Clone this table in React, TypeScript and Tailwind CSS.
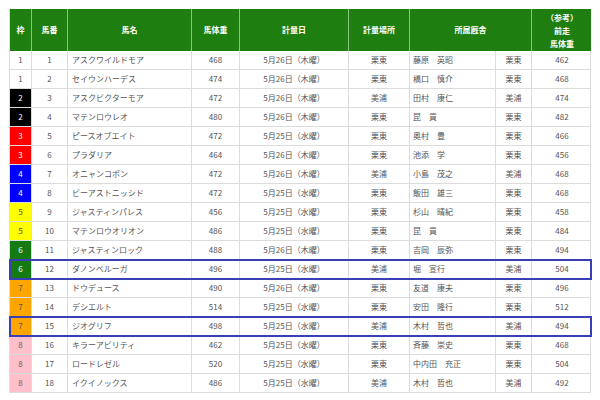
import React from "react";

type Row = {
  waku: number;
  ban: number;
  name: string;
  weight: number;
  day: 25 | 26;
  place: string;
  trainer: string;
  stable: string;
  prev: number;
};

const rows: Row[] = [
  { waku: 1, ban: 1, name: "アスクワイルドモア", weight: 468, day: 26, place: "栗東", trainer: "藤原　英昭", stable: "栗東", prev: 462 },
  { waku: 1, ban: 2, name: "セイウンハーデス", weight: 474, day: 26, place: "栗東", trainer: "橋口　慎介", stable: "栗東", prev: 468 },
  { waku: 2, ban: 3, name: "アスクビクターモア", weight: 472, day: 26, place: "美浦", trainer: "田村　康仁", stable: "美浦", prev: 474 },
  { waku: 2, ban: 4, name: "マテンロウレオ", weight: 480, day: 26, place: "栗東", trainer: "昆　貢", stable: "栗東", prev: 482 },
  { waku: 3, ban: 5, name: "ピースオブエイト", weight: 472, day: 25, place: "栗東", trainer: "奥村　豊", stable: "栗東", prev: 466 },
  { waku: 3, ban: 6, name: "プラダリア", weight: 464, day: 26, place: "栗東", trainer: "池添　学", stable: "栗東", prev: 456 },
  { waku: 4, ban: 7, name: "オニャンコポン", weight: 472, day: 26, place: "美浦", trainer: "小島　茂之", stable: "美浦", prev: 468 },
  { waku: 4, ban: 8, name: "ビーアストニッシド", weight: 472, day: 25, place: "栗東", trainer: "飯田　雄三", stable: "栗東", prev: 468 },
  { waku: 5, ban: 9, name: "ジャスティンパレス", weight: 456, day: 25, place: "栗東", trainer: "杉山　晴紀", stable: "栗東", prev: 458 },
  { waku: 5, ban: 10, name: "マテンロウオリオン", weight: 486, day: 25, place: "栗東", trainer: "昆　貢", stable: "栗東", prev: 484 },
  { waku: 6, ban: 11, name: "ジャスティンロック", weight: 488, day: 26, place: "栗東", trainer: "吉岡　辰弥", stable: "栗東", prev: 494 },
  { waku: 6, ban: 12, name: "ダノンベルーガ", weight: 496, day: 25, place: "美浦", trainer: "堀　宣行", stable: "美浦", prev: 504 },
  { waku: 7, ban: 13, name: "ドウデュース", weight: 490, day: 26, place: "栗東", trainer: "友道　康夫", stable: "栗東", prev: 496 },
  { waku: 7, ban: 14, name: "デシエルト", weight: 514, day: 25, place: "栗東", trainer: "安田　隆行", stable: "栗東", prev: 512 },
  { waku: 7, ban: 15, name: "ジオグリフ", weight: 498, day: 25, place: "美浦", trainer: "木村　哲也", stable: "美浦", prev: 494 },
  { waku: 8, ban: 16, name: "キラーアビリティ", weight: 462, day: 25, place: "栗東", trainer: "斉藤　崇史", stable: "栗東", prev: 468 },
  { waku: 8, ban: 17, name: "ロードレゼル", weight: 520, day: 25, place: "栗東", trainer: "中内田　充正", stable: "栗東", prev: 504 },
  { waku: 8, ban: 18, name: "イクイノックス", weight: 486, day: 25, place: "美浦", trainer: "木村　哲也", stable: "美浦", prev: 492 },
];

const wakuClass: Record<number, string> = {
  1: "bg-white text-[#555]",
  2: "bg-black text-white",
  3: "bg-[#ff0000] text-white",
  4: "bg-[#0000ff] text-white",
  5: "bg-[#ffff00] text-[#555]",
  6: "bg-[#157a12] text-white",
  7: "bg-[#ffa500] text-[#555]",
  8: "bg-[#ffc0cb] text-[#666]",
};

const highlighted = [12, 15];

const cols = "grid grid-cols-[22px_36px_124px_48px_109px_61px_86px_36px_60px]";

export default function App() {
  return (
    <div
      className="w-[600px] h-[400px] bg-white pl-[9px] pt-[9px]"
      style={{ fontFamily: '"Noto Sans CJK JP", "Noto Sans", sans-serif' }}
    >
      <div className="w-[582px] border-l border-[#dcdcdc]">
        {/* header */}
        <div className={`${cols} h-[42px] bg-[#1e7f10] text-white text-[8px] font-bold`}>
          <div className="flex items-center justify-center border-r border-[#8cc283]">枠</div>
          <div className="flex items-center justify-center border-r border-[#8cc283]">馬番</div>
          <div className="flex items-center justify-center border-r border-[#8cc283]">馬名</div>
          <div className="flex items-center justify-center border-r border-[#8cc283]">馬体重</div>
          <div className="flex items-center justify-center border-r border-[#8cc283]">計量日</div>
          <div className="flex items-center justify-center border-r border-[#8cc283]">計量場所</div>
          <div className="col-span-2 flex items-center justify-center border-r border-[#8cc283]">所属厩舎</div>
          <div className="flex flex-col items-center justify-center leading-[13px]">
            <span>（参考）</span>
            <span>前走</span>
            <span>馬体重</span>
          </div>
        </div>

        {/* body */}
        {rows.map((r) => {
          const hl = highlighted.includes(r.ban);
          return (
            <div
              key={r.ban}
              className={`${cols} h-[19px] text-[8px] text-[#555] border-b border-r border-[#dcdcdc] ${
                hl ? "relative z-10 outline-2 outline-[#3a3fb6] -outline-offset-1" : ""
              }`}
            >
              <div className={`flex items-center justify-center border-r border-[#dcdcdc] ${wakuClass[r.waku]}`}>
                {r.waku}
              </div>
              <div className="flex items-center justify-center border-r border-[#dcdcdc]">{r.ban}</div>
              <div className="flex items-center pl-[4px] border-r border-[#dcdcdc]">{r.name}</div>
              <div className="flex items-center justify-center border-r border-[#dcdcdc]">{r.weight}</div>
              <div className="flex items-center justify-center border-r border-[#dcdcdc]">
                {r.day === 26 ? "5月26日（木曜）" : "5月25日（水曜）"}
              </div>
              <div className="flex items-center justify-center border-r border-[#dcdcdc]">{r.place}</div>
              <div className="flex items-center pl-[3px] border-r border-[#dcdcdc]">{r.trainer}</div>
              <div className="flex items-center justify-center border-r border-[#dcdcdc]">{r.stable}</div>
              <div className="flex items-center justify-center">{r.prev}</div>
            </div>
          );
        })}
      </div>
    </div>
  );
}
